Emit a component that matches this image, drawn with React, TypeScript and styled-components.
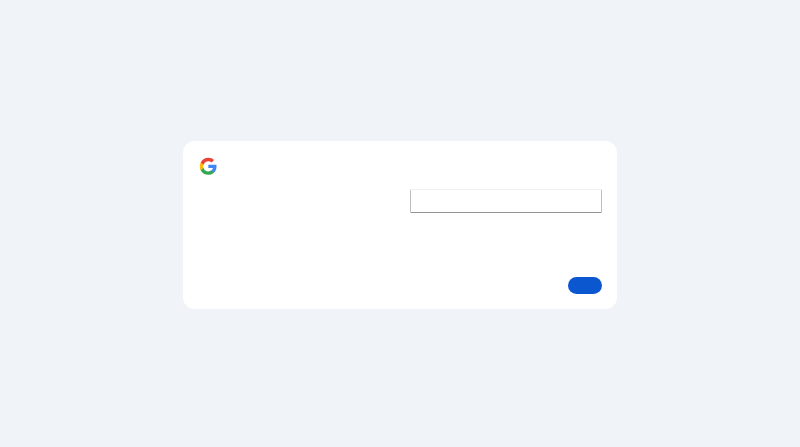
import React from "react";
import styled, { createGlobalStyle } from "styled-components";

const GlobalStyle = createGlobalStyle`
  *, *::before, *::after { box-sizing: border-box; }
  body { margin: 0; background: #f0f4f9; font-family: Roboto, "Liberation Sans", sans-serif; }
`;

const Page = styled.div`
  display: flex;
  justify-content: center;
  align-items: flex-start;
  min-height: 100vh;
  padding-top: 141px;
  background: #f0f4f9;
`;

const Card = styled.main`
  display: flex;
  flex-direction: column;
  width: 433.34px;
  height: 167.7px;
  padding: 15px;
  border-radius: 11.7px;
  background: #fff;
`;

const Logo = styled.svg`
  display: block;
  width: 20px;
  height: 20px;
`;

const Form = styled.form`
  display: flex;
  flex: 1;
  flex-direction: column;
  justify-content: space-between;
  align-items: flex-end;
  padding-top: 13px;
`;

const Field = styled.input`
  width: 192px;
  height: 24px;
  padding: 0 6px;
  border: 1px solid #bdbdbd;
  border-top-color: #f0f0f0;
  border-bottom-color: #929292;
  border-radius: 1.5px;
  outline: none;
  background: #fff;
`;

const Submit = styled.button`
  width: 34px;
  height: 17px;
  padding: 0;
  border: 0;
  border-radius: 8.5px;
  background: #0b57d0;
`;

function GoogleLogo() {
  return (
    <Logo viewBox="-2.6 -2.5 51.5 51.5" aria-hidden="true">
      <path fill="#4285F4" d="M45.12 24.5c0-1.56-.14-3.06-.4-4.5H24v8.51h11.84c-.51 2.75-2.06 5.08-4.39 6.64v5.52h7.11c4.16-3.83 6.56-9.47 6.56-16.17z" />
      <path fill="#34A853" d="M24 46c5.94 0 10.92-1.97 14.56-5.33l-7.11-5.52c-1.97 1.32-4.49 2.1-7.45 2.1-5.73 0-10.58-3.87-12.31-9.07H4.34v5.7C7.96 41.07 15.4 46 24 46z" />
      <path fill="#FBBC05" d="M11.69 28.18C11.25 26.86 11 25.45 11 24s.25-2.86.69-4.18v-5.7H4.34C2.85 17.09 2 20.45 2 24c0 3.55.85 6.91 2.34 9.88l7.35-5.7z" />
      <path fill="#EA4335" d="M24 10.75c3.23 0 6.13 1.11 8.41 3.29l6.31-6.31C34.91 4.18 29.93 2 24 2 15.4 2 7.96 6.93 4.34 14.12l7.35 5.7c1.73-5.2 6.58-9.07 12.31-9.07z" />
    </Logo>
  );
}

export default function App() {
  return (
    <>
      <GlobalStyle />
      <Page>
        <Card>
          <GoogleLogo />
          <Form onSubmit={(event) => event.preventDefault()}>
            <Field type="email" />
            <Submit type="submit" />
          </Form>
        </Card>
      </Page>
    </>
  );
}
